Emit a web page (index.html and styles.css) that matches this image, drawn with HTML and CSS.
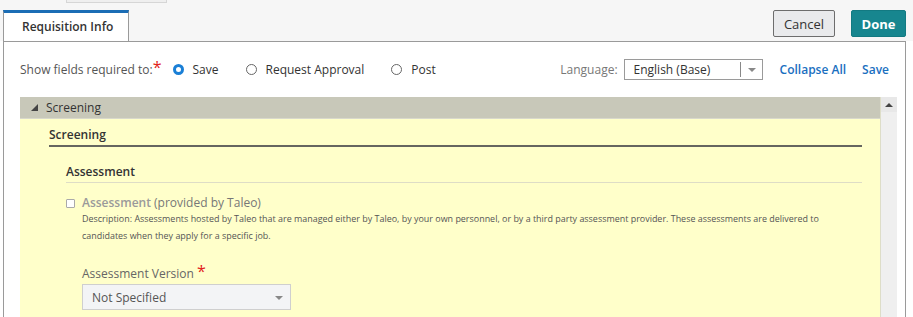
FILE: index.html
```html
<!DOCTYPE html>
<html lang="en">
<head>
  <meta charset="UTF-8">
  <title>Requisition Info</title>
  <link rel="stylesheet" href="styles.css">
</head>
<body>

  <div class="top">
    <div class="top-stub"></div>
    <div class="top-row">
      <div class="tab">Requisition Info</div>
      <div class="actions">
        <button class="btn btn-cancel">Cancel</button>
        <button class="btn btn-done">Done</button>
      </div>
    </div>
  </div>

  <div class="panel">
    <div class="toolbar">
      <div class="required">
        <span class="required-label">Show fields required to:<span class="star">*</span></span>
        <label class="radio"><span class="dot checked"></span>Save</label>
        <label class="radio"><span class="dot"></span>Request Approval</label>
        <label class="radio"><span class="dot"></span>Post</label>
      </div>
      <div class="tools">
        <span class="lang-label">Language:</span>
        <div class="select lang-select">
          <span>English (Base)</span>
          <span class="select-arrow"></span>
        </div>
        <a class="link collapse-link">Collapse All</a>
        <a class="link">Save</a>
      </div>
    </div>

    <div class="section">
      <div class="section-main">
        <div class="section-bar"><span class="twisty"></span>Screening</div>
        <div class="section-body">
          <h2 class="group-title">Screening</h2>
          <div class="subgroup">
            <h3 class="subgroup-title">Assessment</h3>
            <div class="field">
              <div class="check-row">
                <span class="checkbox"></span>
                <span class="check-label"><span class="muted">Assessment</span> (provided by Taleo)</span>
              </div>
              <p class="desc">Description: Assessments hosted by Taleo that are managed either by Taleo, by your own personnel, or by a third party assessment provider. These assessments are delivered to candidates when they apply for a specific job.</p>
            </div>
            <div class="field version">
              <div class="field-label">Assessment Version <span class="star">*</span></div>
              <div class="select version-select">
                <span>Not Specified</span>
                <span class="caret"></span>
              </div>
            </div>
          </div>
        </div>
      </div>
      <div class="scrollbar">
        <div class="scroll-up"></div>
      </div>
    </div>
  </div>

</body>
</html>
```

FILE: styles.css
```css
body {
  margin: 0;
  font-family: "Open Sans", Arial, sans-serif;
  font-size: 12px;
  color: #333;
  background-color: #fff;
  height: 317px;
  overflow: hidden;
}

.top {
  background-color: #f6f6f6;
  height: 41px;
}

.top-stub {
  margin-left: 66px;
  width: 99px;
  height: 2px;
  border: 1px solid #d6d6d6;
  border-top: none;
  background-color: #efefef;
}

.top-row {
  display: flex;
  justify-content: space-between;
  align-items: flex-start;
  margin-top: 7px;
}

.tab {
  position: relative;
  z-index: 1;
  margin-left: 3px;
  width: 106px;
  height: 28px;
  padding-left: 18px;
  line-height: 28px;
  background-color: #fff;
  border-top: 3px solid #1b6db5;
  border-left: 1px solid #9a9a9a;
  border-right: 1px solid #9a9a9a;
  font-weight: 600;
  font-size: 12px;
  color: #333;
}

.actions {
  display: flex;
  gap: 16px;
  margin-right: 7px;
}

.btn {
  font-family: "Open Sans", Arial, sans-serif;
  font-size: 13px;
  height: 27px;
  padding: 0 8px;
  border-radius: 2px;
  cursor: pointer;
}

.btn-cancel {
  width: 62px;
  background-color: #e9eaec;
  border: 1px solid #6d6d6d;
  color: #333;
}

.btn-done {
  width: 55px;
  background-color: #17868f;
  border: 1px solid #137a82;
  color: #fff;
  font-weight: 700;
}

.panel {
  margin: 0 7px 0 3px;
  border: 1px solid #9a9a9a;
  border-bottom: none;
  height: 276px;
  background-color: #fff;
}

.toolbar {
  display: flex;
  justify-content: space-between;
  align-items: center;
  padding: 17px 16px 0 16px;
  height: 21px;
}

.required {
  display: flex;
  align-items: center;
}

.required-label {
  color: #555;
  margin-right: 11px;
}

.star {
  color: #e2231a;
  font-size: 16px;
  vertical-align: top;
  line-height: 13px;
}

.radio {
  display: flex;
  align-items: center;
  margin-right: 27px;
  color: #333;
}

.dot {
  box-sizing: border-box;
  width: 11px;
  height: 11px;
  border: 1px solid #666;
  border-radius: 50%;
  margin-right: 9px;
}

.dot.checked {
  border: 3px solid #1a7fd6;
  background-color: #fff;
}

.tools {
  display: flex;
  align-items: center;
}

.lang-label {
  color: #777;
  margin-right: 6px;
}

.select {
  box-sizing: border-box;
  display: flex;
  align-items: center;
  justify-content: space-between;
  position: relative;
}

.lang-select {
  width: 139px;
  height: 21px;
  padding-left: 9px;
  border: 1px solid #9a9a9a;
  margin-right: 17px;
  color: #333;
}

.select-arrow {
  width: 21px;
  height: 15px;
  border-left: 1px solid #888;
  position: relative;
}

.select-arrow::after,
.caret::after {
  content: "";
  position: absolute;
  left: 7px;
  top: 6px;
  border-left: 4px solid transparent;
  border-right: 4px solid transparent;
  border-top: 4px solid #888;
}

.link {
  color: #1a6fbf;
  font-weight: 600;
  cursor: pointer;
}

.collapse-link {
  margin-right: 16px;
}

.section {
  display: flex;
  margin: 17px 8px 0 16px;
  height: 220px;
}

.section-main {
  flex: 1;
  display: flex;
  flex-direction: column;
  border-right: 1px solid #ddddc8;
}

.section-bar {
  height: 21px;
  background-color: #c8c8b9;
  border-bottom: 1px solid #d9d9cc;
  color: #333;
  display: flex;
  align-items: center;
}

.twisty {
  width: 0;
  height: 0;
  margin: 0 8px 0 11px;
  border-left: 7px solid transparent;
  border-bottom: 7px solid #444;
}

.section-body {
  flex: 1;
  background-color: #ffffca;
  padding: 5px 18px 0 29px;
}

.group-title {
  margin: 0;
  font-size: 12px;
  font-weight: 600;
  color: #333;
  line-height: 21px;
  border-bottom: 2px solid #666660;
}

.subgroup {
  padding-left: 17px;
}

.subgroup-title {
  margin: 15px 0 0 0;
  font-size: 12px;
  font-weight: 600;
  color: #333;
  line-height: 20px;
  border-bottom: 1px solid #deddc6;
}

.field {
  padding-left: 16px;
}

.check-row {
  display: flex;
  align-items: center;
  line-height: 14px;
  margin-top: 13px;
  margin-left: -16px;
}

.checkbox {
  box-sizing: border-box;
  width: 9px;
  height: 9px;
  border: 1px solid #aaa;
  border-radius: 1px;
  background-color: #fff;
  margin-right: 7px;
}

.check-label {
  color: #777;
}

.muted {
  color: #9a9a9a;
  font-weight: 600;
}

.desc {
  margin: 0;
  font-size: 8.95px;
  line-height: 17px;
  color: #555;
  max-width: 770px;
}

.version {
  margin-top: 21px;
}

.field-label {
  color: #666;
  line-height: 17px;
}

.version-select {
  width: 209px;
  height: 26px;
  margin-top: 2px;
  padding-left: 9px;
  background-color: #f3f4f6;
  border: 1px solid #cfcfcf;
  color: #555;
  font-size: 12px;
}

.caret {
  position: relative;
  width: 22px;
  height: 14px;
}

.scrollbar {
  width: 16px;
  background-color: #efefef;
}

.scroll-up {
  height: 15px;
  position: relative;
  background-color: #e8e8e8;
}

.scroll-up::after {
  content: "";
  position: absolute;
  left: 4px;
  top: 6px;
  border-left: 4px solid transparent;
  border-right: 4px solid transparent;
  border-bottom: 4px solid #444;
}
```
